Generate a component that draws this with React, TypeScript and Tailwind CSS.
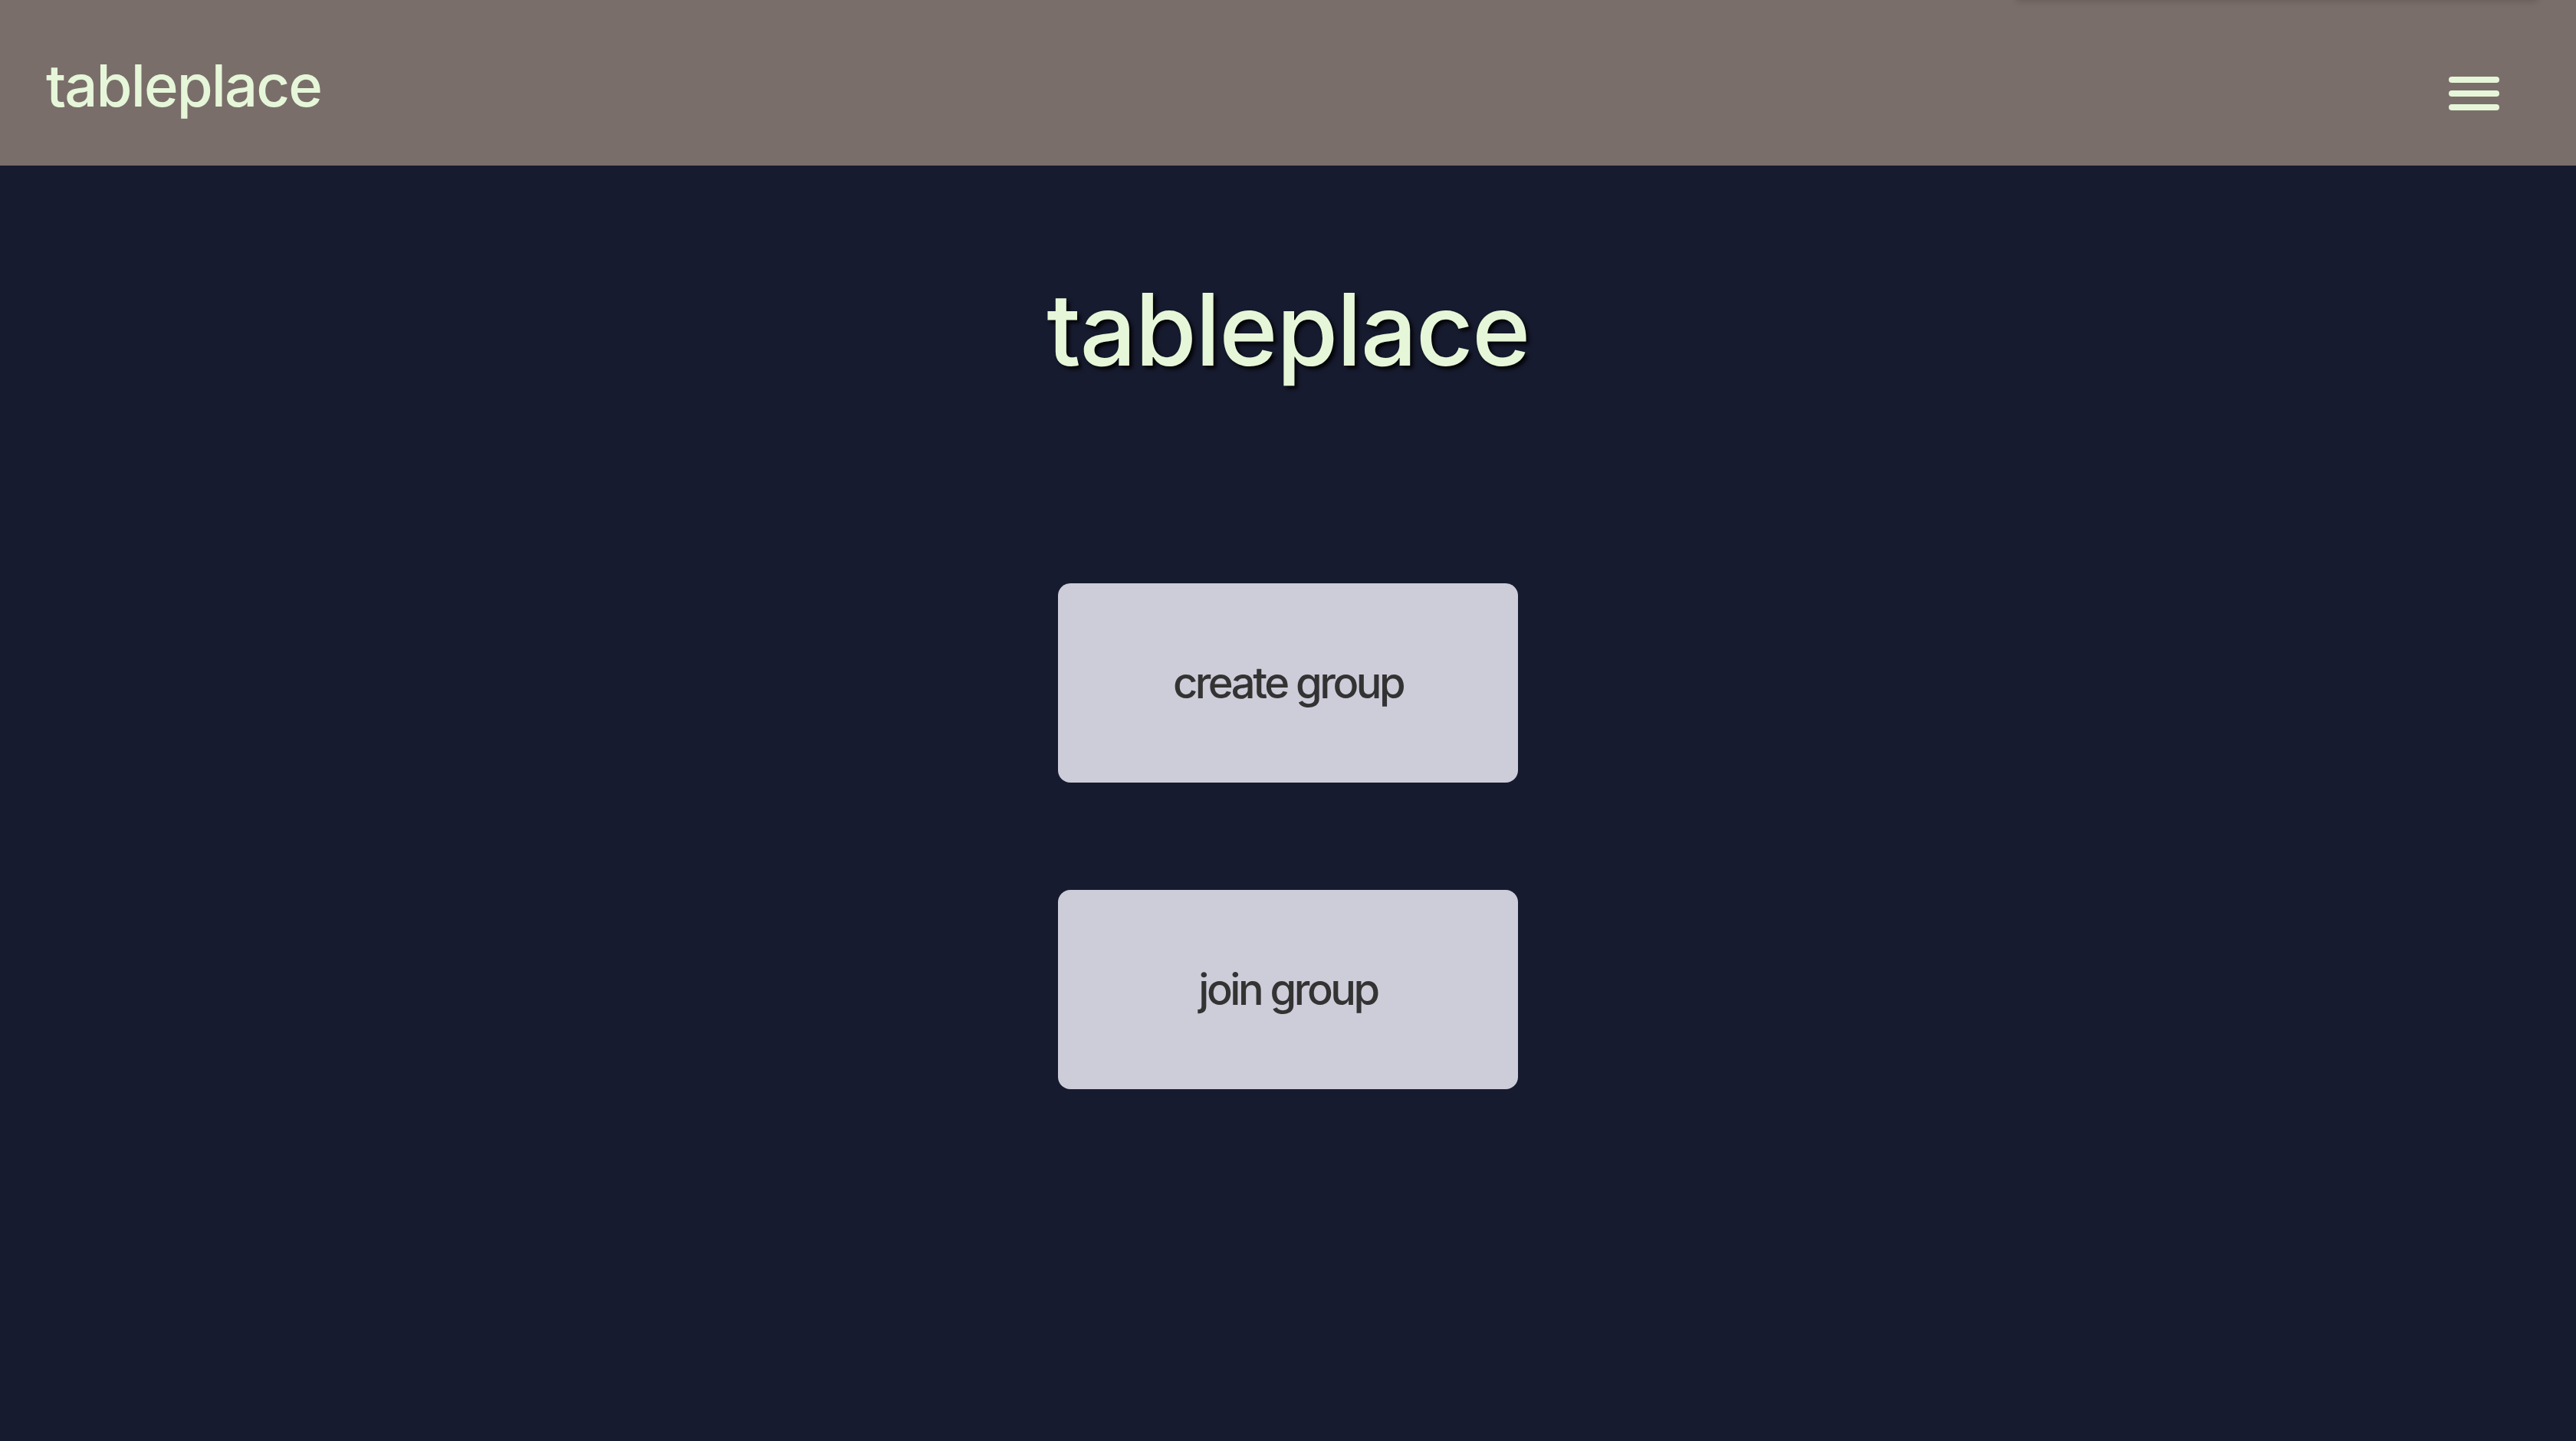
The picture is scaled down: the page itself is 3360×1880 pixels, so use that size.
import { useState } from "react";

function MenuIcon() {
  return (
    <svg width="66" height="44" viewBox="0 0 66 44" fill="none">
      <line x1="4" y1="4" x2="62" y2="4" stroke="#e6f7d9" strokeWidth="8" strokeLinecap="round" />
      <line x1="4" y1="22" x2="62" y2="22" stroke="#e6f7d9" strokeWidth="8" strokeLinecap="round" />
      <line x1="4" y1="40" x2="62" y2="40" stroke="#e6f7d9" strokeWidth="8" strokeLinecap="round" />
    </svg>
  );
}

function BigButton({ label }: { label: string }) {
  return (
    <button className="flex h-[260px] w-[600px] items-center justify-center rounded-[16px] bg-[#cdccd9] text-[56px] font-medium tracking-[-0.062em] text-[#333333]">
      {label}
    </button>
  );
}

export default function App() {
  const [open, setOpen] = useState(false);

  return (
    <div className="flex min-h-[1880px] flex-col bg-[#171b2f] font-['Inter','Liberation_Sans',sans-serif]">
      {/* header */}
      <header className="relative flex h-[216px] shrink-0 items-center justify-between bg-[#7a6e6a] pl-[60px] pr-[100px]">
        <div className="absolute right-[50px] top-[-120px] h-[120px] w-[680px] bg-[#7a6e6a] shadow-[0_2px_8px_rgba(0,0,0,0.15)]" />
        <span className="mt-[6px] text-[76px] font-medium leading-none tracking-[-0.025em] text-[#e6f7d9]">tableplace</span>
        <button onClick={() => setOpen(!open)} className="mt-[28px]" aria-label="menu">
          <MenuIcon />
        </button>
      </header>

      {/* main */}
      <main className="flex flex-col items-center">
        <h1 className="mt-[149px] text-[130px] font-medium leading-none tracking-[-0.013em] text-[#e6f7d9] [text-shadow:4px_4px_5px_rgba(0,0,0,0.85)]">
          tableplace
        </h1>
        <div className="mt-[266px] flex flex-col gap-[140px]">
          <BigButton label="create group" />
          <BigButton label="join group" />
        </div>
      </main>
    </div>
  );
}
